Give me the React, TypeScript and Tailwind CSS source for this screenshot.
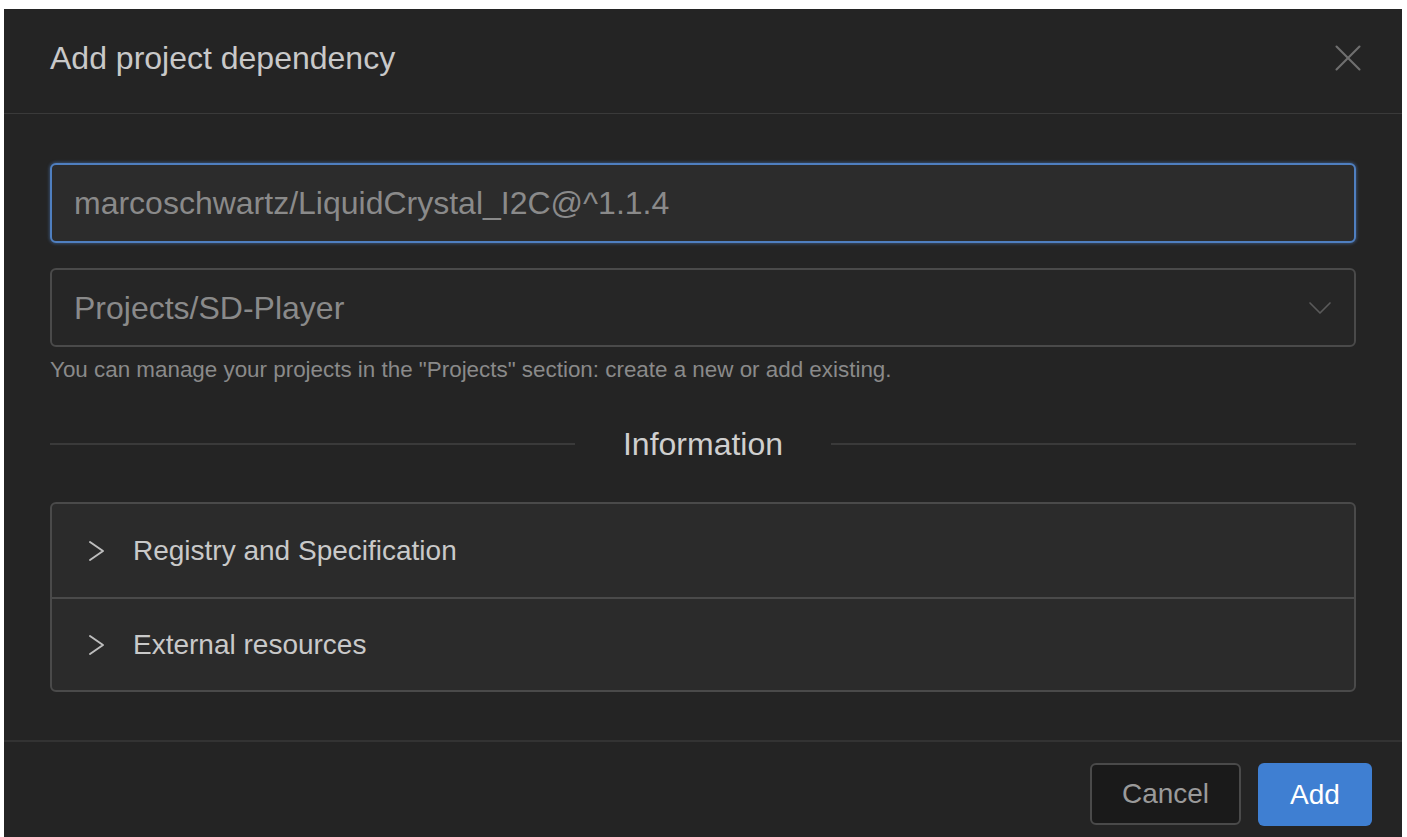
import { X, ChevronDown } from "lucide-react";

const sections = ["Registry and Specification", "External resources"];

// thin ">" used by the accordion rows
function RowChevron() {
  return (
    <svg width="17" height="22" viewBox="0 0 17 22" fill="none" className="shrink-0">
      <polyline points="2,2 15,11 2,20" stroke="#bdbdbd" strokeWidth="2" strokeLinecap="round" strokeLinejoin="round" />
    </svg>
  );
}

export default function App() {
  return (
    <div className="min-h-screen bg-white pt-[9px] pl-[4px] pr-[5px] font-['Liberation_Sans',Arial,sans-serif]">
      <div className="h-[828px] bg-[#242424] flex flex-col">
        {/* Header */}
        <div className="h-[105px] shrink-0 flex items-center justify-between pl-[46px] pr-[31px] pb-[6px] border-b border-[#3a3a3a]">
          <h1 className="text-[32px] text-[#c9c9c9]">Add project dependency</h1>
          <X className="w-[46px] h-[46px] text-[#6f6f6f]" strokeWidth={1.1} />
        </div>

        {/* Body */}
        <div className="flex-1 px-[46px] pt-[49px]">
          <div className="h-[80px] rounded-[6px] border-2 border-[#4f7fc0] bg-[#2c2c2c] shadow-[0_0_3px_1px_rgba(79,127,192,0.45)] flex items-center px-[22px]">
            <span className="text-[32px] text-[#8a8a8a]">marcoschwartz/LiquidCrystal_I2C@^1.1.4</span>
          </div>

          <div className="mt-[25px] h-[79px] rounded-[6px] border-2 border-[#4a4a4a] bg-[#262626] flex items-center justify-between pl-[22px] pr-[14px]">
            <span className="text-[32px] text-[#8a8a8a]">Projects/SD-Player</span>
            <ChevronDown className="w-[40px] h-[40px] text-[#5a5a5a]" strokeWidth={1} />
          </div>

          <p className="mt-[11px] text-[22.4px] leading-[24px] text-[#8a8a8a]">
            You can manage your projects in the "Projects" section: create a new or add existing.
          </p>

          {/* Information divider */}
          <div className="mt-[44px] h-[36px] flex items-center gap-[48px]">
            <div className="flex-1 h-[2px] bg-[#3a3a3a]" />
            <span className="text-[32px] text-[#cfcfcf]">Information</span>
            <div className="flex-1 h-[2px] bg-[#3a3a3a]" />
          </div>

          <div className="mt-[40px] rounded-[6px] border-2 border-[#4a4a4a] bg-[#2b2b2b] overflow-hidden">
            {sections.map((s, i) => (
              <div
                key={s}
                className={`h-[93px] flex items-center pl-[36px] gap-[28px] ${i > 0 ? "border-t-2 border-[#4a4a4a]" : ""}`}
              >
                <RowChevron />
                <span className="text-[28px] text-[#c9c9c9]">{s}</span>
              </div>
            ))}
          </div>
        </div>

        {/* Footer */}
        <div className="h-[97px] shrink-0 border-t-2 border-[#333333] flex justify-end items-start pt-[21px] pr-[30px] gap-[17px]">
          <button className="w-[151px] h-[62px] rounded-[6px] border-2 border-[#4a4a4a] bg-[#1a1a1a] text-[28px] text-[#9a9a9a]">
            Cancel
          </button>
          <button className="w-[114px] h-[63px] rounded-[6px] bg-[#3f7fd2] text-[28px] text-white">
            Add
          </button>
        </div>
      </div>
    </div>
  );
}
